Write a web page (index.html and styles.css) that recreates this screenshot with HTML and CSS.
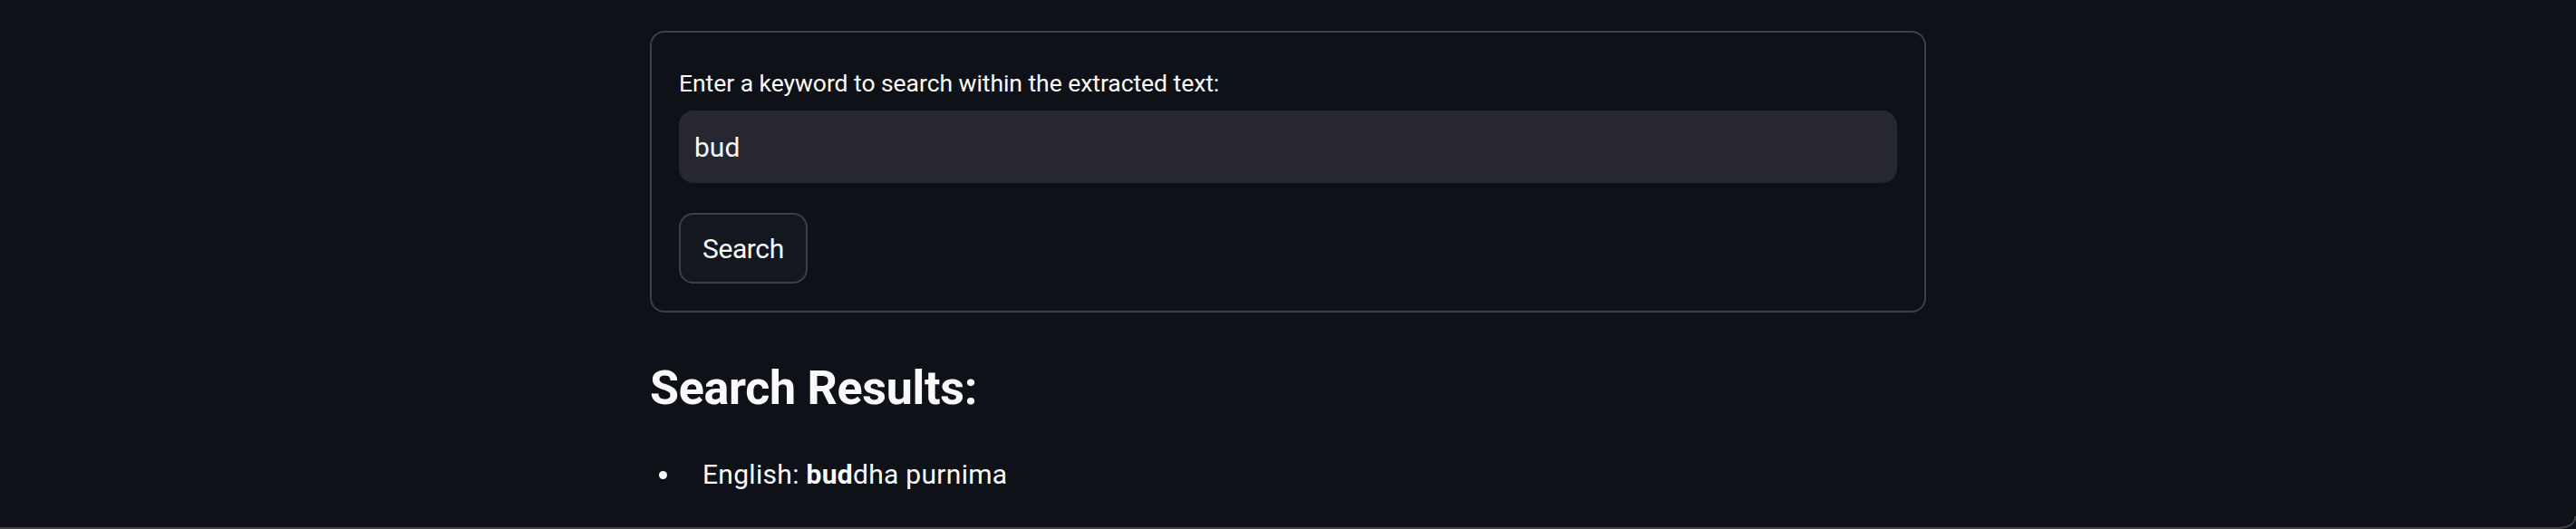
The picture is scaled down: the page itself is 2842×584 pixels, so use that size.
FILE: index.html
```html
<!DOCTYPE html>
<html lang="en">
<head>
<meta charset="utf-8">
<title>Search</title>
<link rel="stylesheet" href="styles.css">
</head>
<body>
<main class="container">
  <form class="search-form" onsubmit="return false;">
    <label class="field-label" for="kw">Enter a keyword to search within the extracted text:</label>
    <div class="input-wrap"><input id="kw" class="text-input" type="text" value="bud"></div>
    <button class="btn" type="submit">Search</button>
  </form>
  <h3 class="results-title">Search Results:</h3>
  <ul class="results">
    <li class="result">English: <strong>bud</strong>dha purnima</li>
  </ul>
</main>
<div class="frame-edge"></div>
</body>
</html>
```
FILE: styles.css
```css
html, body {
  margin: 0;
  padding: 0;
  background: #0e1117;
  color: #fafafa;
  font-family: Roboto, "Noto Sans", sans-serif;
  height: 100%;
  overflow: hidden;
}

.container {
  width: 1408px;
  margin: 0 auto;
  padding-top: 34px;
}

.search-form {
  border: 2px solid #3d4044;
  border-radius: 16px;
  padding: 34px 30px 30px;
  display: flex;
  flex-direction: column;
  align-items: flex-start;
}

.field-label {
  font-size: 26.5px;
  line-height: 44px;
  margin-bottom: 8px;
  letter-spacing: -0.05px;
}

.input-wrap {
  align-self: stretch;
  height: 80px;
  background: #262730;
  border-radius: 16px;
  display: flex;
  align-items: center;
}

.text-input {
  flex: 1;
  border: 0;
  outline: 0;
  background: transparent;
  color: #fafafa;
  font-family: inherit;
  font-size: 30px;
  padding: 0 17px;
  height: 80px;
}

.btn {
  margin-top: 33px;
  height: 78px;
  padding: 0 24px;
  background: #131720;
  border: 2px solid #3d4044;
  border-radius: 16px;
  color: #fafafa;
  font-family: inherit;
  font-size: 30px;
  letter-spacing: -0.4px;
}

.results-title {
  margin: 53px 0 0;
  font-size: 52px;
  line-height: 62px;
  font-weight: 700;
  letter-spacing: -0.3px;
}

.results {
  list-style: none;
  margin: 40px 0 0;
  padding: 0;
}

.result {
  display: flex;
  align-items: center;
  font-size: 30px;
  line-height: 48px;
  letter-spacing: 0.3px;
  white-space: pre;
}

.result::before {
  content: "";
  width: 9px;
  height: 9px;
  border-radius: 50%;
  background: #fafafa;
  margin-left: 10px;
  margin-right: 39px;
  flex: none;
}

.result strong {
  font-weight: 700;
}

.frame-edge {
  position: fixed;
  left: 0;
  right: 0;
  bottom: 0;
  height: 12px;
  border-bottom: 2px solid #434343;
  border-right: 2px solid #434343;
  border-bottom-right-radius: 20px 12px;
  pointer-events: none;
}
```
